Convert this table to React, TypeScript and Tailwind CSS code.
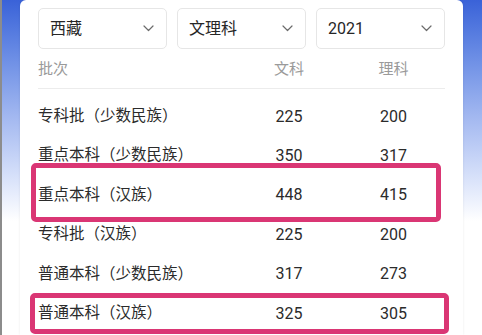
import { useState } from "react";

interface Row {
  name: string;
  wen: number;
  li: number;
}

const rows: Row[] = [
  { name: "专科批（少数民族）", wen: 225, li: 200 },
  { name: "重点本科（少数民族）", wen: 350, li: 317 },
  { name: "重点本科（汉族）", wen: 448, li: 415 },
  { name: "专科批（汉族）", wen: 225, li: 200 },
  { name: "普通本科（少数民族）", wen: 317, li: 273 },
  { name: "普通本科（汉族）", wen: 325, li: 305 },
];

function Chevron() {
  return (
    <svg width="11" height="7" viewBox="0 0 11 7" fill="none" className="shrink-0">
      <path d="M1 1l4.5 4.5L10 1" stroke="#6b6b6b" strokeWidth="1.2" strokeLinecap="round" strokeLinejoin="round" />
    </svg>
  );
}

function Picker({ value }: { value: string }) {
  return (
    <div className="flex h-[41px] items-center justify-between rounded-[5px] border border-[#e6e6e6] bg-white pl-[11px] pr-[12px] text-[16px] text-[#262626]">
      <span>{value}</span>
      <Chevron />
    </div>
  );
}

export default function App() {
  const [province] = useState("西藏");
  const [kind] = useState("文理科");
  const [year] = useState("2021");

  return (
    <div
      className="flex h-[335px] w-[482px] overflow-hidden border-l-2 border-[#8c8c8c] bg-linear-to-b from-[#3a62d8] via-[#a3b8f0] via-35% to-white to-66%"
      style={{ fontFamily: 'Roboto, "Noto Sans CJK SC", "Noto Sans", sans-serif' }}
    >
      <div className="relative ml-[18px] w-[443px] rounded-t-[6px] bg-white px-[18px] pt-[8px] shadow-[0_0_3px_rgba(0,0,0,0.08)]">
        {/* 筛选 */}
        <div className="grid grid-cols-3 gap-[10px]">
          <Picker value={province} />
          <Picker value={kind} />
          <Picker value={year} />
        </div>

        {/* 表头 */}
        <div className="grid h-[40px] grid-cols-[198px_106px_1fr] items-center border-b border-[#ececec] pt-[2px] text-[15px] text-[#9a9a9a]">
          <span>批次</span>
          <span className="text-center">文科</span>
          <span className="text-center">理科</span>
        </div>

        <div className="pt-[8px]">
          {rows.map((r) => (
            <div key={r.name} className="grid h-[39.4px] grid-cols-[198px_106px_1fr] items-center text-[#2b2b2b]">
              <span className="text-[15.5px]">{r.name}</span>
              <span className="text-center text-[16px]">{r.wen}</span>
              <span className="text-center text-[16px]">{r.li}</span>
            </div>
          ))}
        </div>

        {/* 标注框 */}
        <div className="absolute left-[11px] top-[163px] h-[59px] w-[410px] rounded-[5px] border-[5px] border-[#da3674]" />
        <div className="absolute left-[10px] top-[293px] h-[41px] w-[419px] rounded-[5px] border-[5px] border-[#da3674]" />
      </div>
    </div>
  );
}
